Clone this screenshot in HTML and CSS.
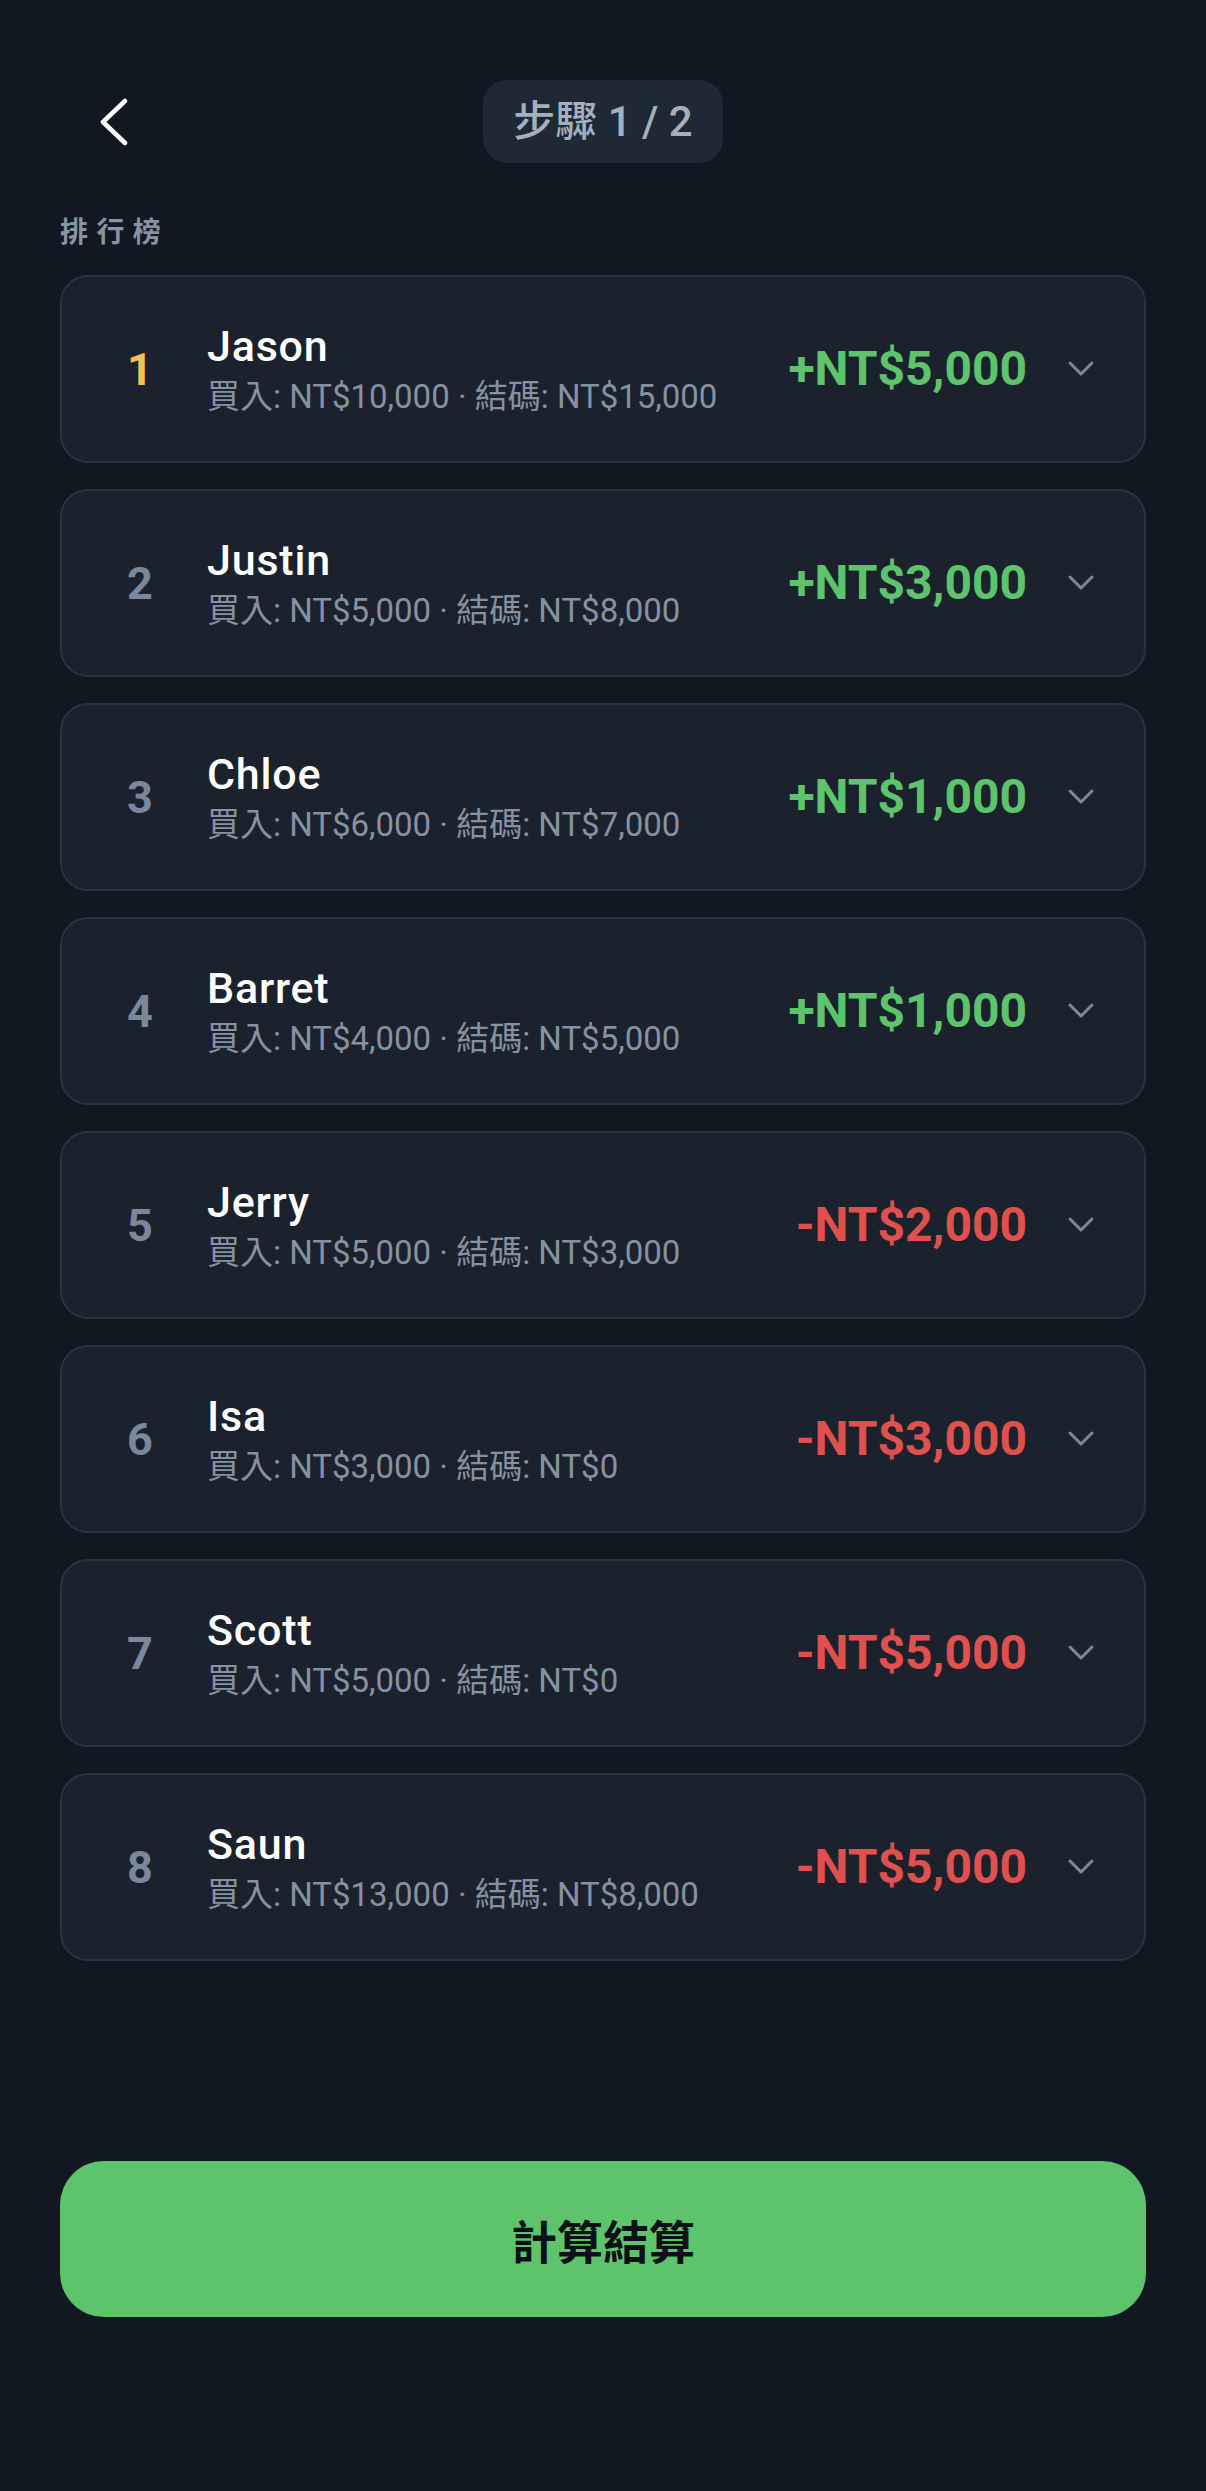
FILE: index.html
```html
<!DOCTYPE html>
<html lang="zh-Hant">
<head>
    <meta charset="UTF-8">
    <meta name="viewport" content="width=device-width, initial-scale=1.0">
    <title>步驟 1 / 2 - 排行榜</title>
    <link rel="stylesheet" href="styles.css">
</head>
<body>
    <div class="page">
        <header class="topbar">
            <button class="back" aria-label="返回">
                <svg width="28" height="48" viewBox="0 0 28 48">
                    <polyline points="25,3 3,24 25,45" fill="none" stroke="#fff" stroke-width="4.5" stroke-linecap="round" stroke-linejoin="round"/>
                </svg>
            </button>
            <div class="step">步驟 1 / 2</div>
            <div></div>
        </header>

        <h2 class="label">排行榜</h2>

        <ul class="ranking">
            <li class="card">
                <span class="rank first">1</span>
                <div class="info">
                    <span class="name">Jason</span>
                    <span class="detail">買入: NT$10,000 · 結碼: NT$15,000</span>
                </div>
                <span class="amount win">+NT$5,000</span>
                <svg class="toggle" width="28" height="18" viewBox="0 0 28 18"><polyline points="3,3 14,14 25,3"/></svg>
            </li>
            <li class="card">
                <span class="rank">2</span>
                <div class="info">
                    <span class="name">Justin</span>
                    <span class="detail">買入: NT$5,000 · 結碼: NT$8,000</span>
                </div>
                <span class="amount win">+NT$3,000</span>
                <svg class="toggle" width="28" height="18" viewBox="0 0 28 18"><polyline points="3,3 14,14 25,3"/></svg>
            </li>
            <li class="card">
                <span class="rank">3</span>
                <div class="info">
                    <span class="name">Chloe</span>
                    <span class="detail">買入: NT$6,000 · 結碼: NT$7,000</span>
                </div>
                <span class="amount win">+NT$1,000</span>
                <svg class="toggle" width="28" height="18" viewBox="0 0 28 18"><polyline points="3,3 14,14 25,3"/></svg>
            </li>
            <li class="card">
                <span class="rank">4</span>
                <div class="info">
                    <span class="name">Barret</span>
                    <span class="detail">買入: NT$4,000 · 結碼: NT$5,000</span>
                </div>
                <span class="amount win">+NT$1,000</span>
                <svg class="toggle" width="28" height="18" viewBox="0 0 28 18"><polyline points="3,3 14,14 25,3"/></svg>
            </li>
            <li class="card">
                <span class="rank">5</span>
                <div class="info">
                    <span class="name">Jerry</span>
                    <span class="detail">買入: NT$5,000 · 結碼: NT$3,000</span>
                </div>
                <span class="amount loss">-NT$2,000</span>
                <svg class="toggle" width="28" height="18" viewBox="0 0 28 18"><polyline points="3,3 14,14 25,3"/></svg>
            </li>
            <li class="card">
                <span class="rank">6</span>
                <div class="info">
                    <span class="name">Isa</span>
                    <span class="detail">買入: NT$3,000 · 結碼: NT$0</span>
                </div>
                <span class="amount loss">-NT$3,000</span>
                <svg class="toggle" width="28" height="18" viewBox="0 0 28 18"><polyline points="3,3 14,14 25,3"/></svg>
            </li>
            <li class="card">
                <span class="rank">7</span>
                <div class="info">
                    <span class="name">Scott</span>
                    <span class="detail">買入: NT$5,000 · 結碼: NT$0</span>
                </div>
                <span class="amount loss">-NT$5,000</span>
                <svg class="toggle" width="28" height="18" viewBox="0 0 28 18"><polyline points="3,3 14,14 25,3"/></svg>
            </li>
            <li class="card">
                <span class="rank">8</span>
                <div class="info">
                    <span class="name">Saun</span>
                    <span class="detail">買入: NT$13,000 · 結碼: NT$8,000</span>
                </div>
                <span class="amount loss">-NT$5,000</span>
                <svg class="toggle" width="28" height="18" viewBox="0 0 28 18"><polyline points="3,3 14,14 25,3"/></svg>
            </li>
        </ul>

        <footer class="actions">
            <button class="settle">計算結算</button>
        </footer>
    </div>
</body>
</html>
```

FILE: styles.css
```css
* {
    box-sizing: border-box;
}

body {
    margin: 0;
    padding: 0;
    background: #111821;
    color: #fff;
    font-family: Roboto, "Noto Sans CJK TC", sans-serif;
}

.page {
    min-height: 100vh;
    display: flex;
    flex-direction: column;
    padding: 80px 60px 174px;
}

.topbar {
    display: grid;
    grid-template-columns: 1fr auto 1fr;
    align-items: center;
}

.back {
    justify-self: start;
    margin-left: 40px;
    padding: 0;
    border: none;
    background: none;
    display: flex;
}

.step {
    background: #1f2935;
    color: #a5afbd;
    font-size: 42px;
    font-weight: 500;
    line-height: 83px;
    height: 83px;
    padding: 0 30px;
    border-radius: 24px;
}

.label {
    margin: 52px 0 24px;
    font-size: 28px;
    line-height: 36px;
    font-weight: 700;
    letter-spacing: 0.3em;
    color: #8893a4;
}

.ranking {
    list-style: none;
    margin: 0;
    padding: 0;
    display: flex;
    flex-direction: column;
    gap: 26px;
}

.card {
    display: flex;
    align-items: center;
    height: 188px;
    padding: 0 49px 0 49px;
    background: #1b222d;
    border: 2px solid #2a3342;
    border-radius: 28px;
}

.rank {
    width: 58px;
    text-align: center;
    font-size: 45px;
    font-weight: 700;
    color: #7b879a;
}

.rank.first {
    color: #f4c04f;
}

.info {
    flex: 1;
    display: flex;
    flex-direction: column;
    gap: 7px;
    margin-left: 38px;
}

.name {
    font-size: 43px;
    line-height: 48px;
    font-weight: 500;
    letter-spacing: 0.8px;
    color: #fff;
}

.detail {
    font-size: 33px;
    line-height: 40px;
    color: #8691a2;
}

.amount {
    font-size: 48px;
    font-weight: 700;
    line-height: 1;
}

.win {
    color: #5ec46b;
}

.loss {
    color: #e0504d;
}

.toggle {
    margin-left: 40px;
    fill: none;
    stroke: #7b879a;
    stroke-width: 3;
    stroke-linecap: round;
    stroke-linejoin: round;
}

.actions {
    margin-top: auto;
}

.settle {
    display: block;
    width: 100%;
    height: 156px;
    border: none;
    border-radius: 44px;
    background: #5ec46b;
    color: #0d1117;
    font-family: Roboto, "Noto Sans CJK TC", sans-serif;
    font-size: 46px;
    font-weight: 700;
}
```
